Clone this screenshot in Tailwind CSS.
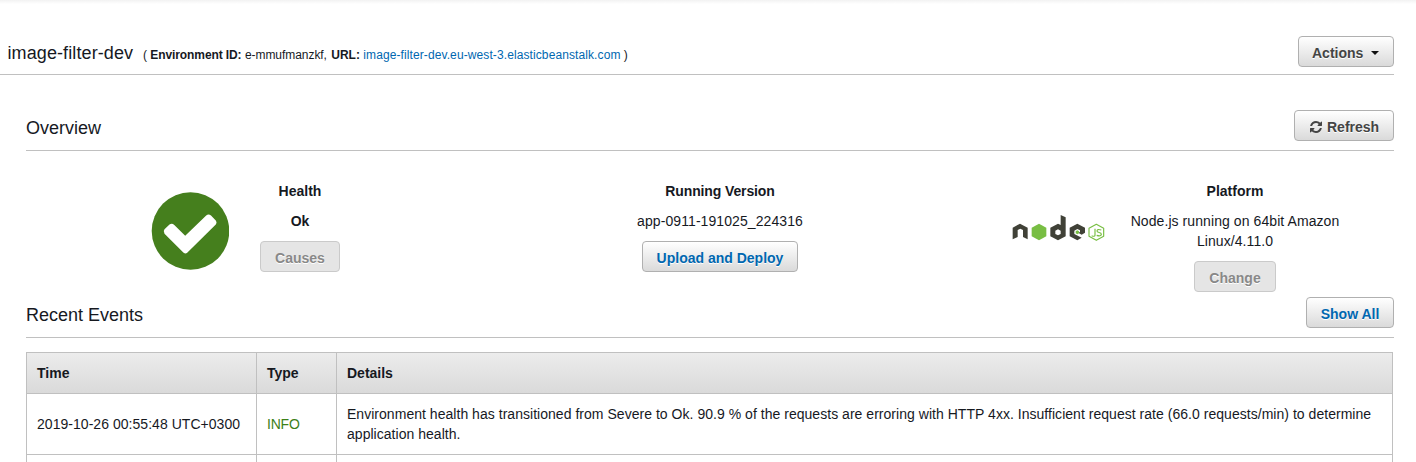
<!DOCTYPE html>
<html lang="en">
<head>
<meta charset="utf-8">
<title>image-filter-dev</title>
<script src="https://cdn.jsdelivr.net/npm/@tailwindcss/browser@4"></script>
</head>
<body class="h-[462px] overflow-hidden bg-white font-['Liberation_Sans',Arial,sans-serif] text-sm leading-5 text-[#16191f]">
<div class="h-1 bg-linear-to-b from-[#f2f2f2] to-white"></div>
<header class="mr-[22px] flex h-[71px] items-start justify-between border-b border-[#c0c0c0] pl-[7.500px]">
  <div class="flex items-baseline pt-[37px]">
    <h1 class="w-[135.500px] whitespace-nowrap text-lg leading-6 tracking-[0.1px]">image-filter-dev</h1>
    <p class="whitespace-nowrap text-xs">( <b class="tracking-[-0.1px]">Environment ID:</b> <span class="tracking-[-0.05px]">e-mmufmanzkf,</span> <b class="ml-px">URL:</b> <a class="tracking-[0.1px] text-[#0067b0]">image-filter-dev.eu-west-3.elasticbeanstalk.com</a> )</p>
  </div>
  <button class="mt-8 flex h-[31px] w-24 items-center rounded border border-[#b0b0b0] bg-linear-to-b from-white to-[#dadada] pt-[3px] pl-[13px] font-bold text-[#444] [text-shadow:0_1px_0_#fff]">Actions
    <svg class="mb-px ml-2 h-1 w-2" viewBox="0 0 8 4" fill="#111"><path d="M0 0H8L4 4Z"/></svg>
  </button>
</header>
<main class="mr-[22px] ml-[26px]">
  <section>
    <div class="flex h-[76px] items-start justify-between border-b border-[#c0c0c0] pt-[35px]">
      <h2 class="pt-1.5 text-lg leading-6">Overview</h2>
      <button class="flex h-[31px] w-[100px] items-center rounded border border-[#b0b0b0] bg-linear-to-b from-white to-[#dadada] pt-[3px] pl-[15px] font-bold text-[#444] [text-shadow:0_1px_0_#fff]">
        <svg class="mr-[5px] h-3 w-3 shrink-0" viewBox="0 0 1536 1536" fill="#444"><path d="M1511 928q0 5-1 7-64 268-268 434.500T764 1536q-146 0-282.500-55T238 1324l-129 129q-19 19-45 19t-45-19-19-45V960q0-26 19-45t45-19h448q26 0 45 19t19 45-19 45l-137 137q71 66 161 102t187 36q134 0 250-65t186-179q11-17 53-117 8-23 30-23h192q13 0 22.500 9.500t9.500 22.500zm25-800v448q0 26-19 45t-45 19h-448q-26 0-45-19t-19-45 19-45l138-138Q969 256 768 256q-134 0-250 65T332 500q-11 17-53 117-8 23-30 23H50q-13 0-22.500-9.500T18 608v-7q65-268 270-434.500T768 0q146 0 284 55.500T1297 212l130-129q19-19 45-19t45 19 19 45z"/></svg>Refresh
      </button>
    </div>
    <div class="flex h-[146px] items-start justify-between pt-[30px] pr-11 pl-[125px]">
      <div class="flex items-start">
        <svg class="mt-[11px] h-[78px] w-[78px]" viewBox="0 0 78 78"><circle cx="39.500" cy="39" r="38.800" fill="#457f1d"/><path d="M13.500 37.300 18.500 32.500Q21 31 23.300 32.900L34.200 43.800 55.200 23.500Q57.500 21.700 60 23.500L65 28.700Q66.200 30.500 64.800 32.600L36.200 60.700Q34.500 62.200 32.600 60.700L13.500 41.700Q11.700 39.500 13.500 37.300Z" fill="white"/></svg>
        <div class="ml-[31px] w-20 text-center"><b class="block">Health</b><b class="mt-2.5 block">Ok</b><button class="mt-2.5 h-[31px] w-20 rounded border border-[#cacaca] bg-[#e5e5e5] pt-[3px] font-bold text-[#888] [text-shadow:0_1px_0_#fff]">Causes</button></div>
      </div>
      <div class="ml-[87px] w-[168px] text-center"><b class="block tracking-[-0.12px]">Running Version</b><p class="mt-2.5 tracking-[0.08px]">app-0911-191025_224316</p><button class="mt-2.5 h-[31px] w-[156px] rounded border border-[#b0b0b0] bg-linear-to-b from-white to-[#dadada] pt-[3px] font-bold text-[#0067b0] [text-shadow:0_1px_0_#fff]">Upload and Deploy</button></div>
      <div class="flex items-start">
        <svg class="mt-[33px] h-[27px] w-[92px] overflow-visible" viewBox="24 26 276 81">
          <g fill="#404137">
            <path d="M23 67 45 55 68 67V102L54 95V74L46 70 38 74V95L23 102Z"/>
            <path fill-rule="evenodd" d="M167 29 182 36V93L159 105 136 93V67L159 55 167 59ZM159 72 151 76V86L159 90 167 86V76Z"/>
            <path fill-rule="evenodd" d="M217 55 240 67V82L230 88 221 83 225 79V75L217 71 208 76V86L230 97 217 105 194 93V67Z"/>
          </g>
          <path fill="#78be43" d="m102 55 22 12v26l-22 12-22-12V67Z"/>
          <path fill="#78be43" d="m217 75 5 3v6l-5 3-5-3v-6Z"/>
          <g fill="none" stroke="#78be43" stroke-width="3.500" stroke-linejoin="round"><path d="m274 57 22 12v24l-22 12-22-12V69Z"/><path d="M270 70V90Q269 95 260 91M289 74Q276 70 276 77C276 84 289 79 289 87Q288 94 275 90"/></g>
        </svg>
        <div class="ml-[15px] w-[230px] text-center"><b class="block">Platform</b><p class="mt-2.5 tracking-[0.08px]">Node.js running on 64bit Amazon<br>Linux/4.11.0</p><button class="mt-2.5 h-[31px] w-[82px] rounded border border-[#cacaca] bg-[#e5e5e5] pt-[3px] font-bold text-[#888] [text-shadow:0_1px_0_#fff]">Change</button></div>
      </div>
    </div>
  </section>
  <section>
    <div class="flex h-[41px] items-start justify-between border-b border-[#c0c0c0]">
      <h2 class="pt-1.5 text-lg leading-6">Recent Events</h2>
      <button class="h-[31px] w-[88px] rounded border border-[#b0b0b0] bg-linear-to-b from-white to-[#dadada] pt-[3px] font-bold text-[#0067b0] [text-shadow:0_1px_0_#fff]">Show All</button>
    </div>
    <div class="mt-3.5 mr-px grid grid-cols-[231px_80px_1fr] border border-b-0 border-[#c0c0c0]">
      <div class="col-span-3 grid h-[41px] grid-cols-subgrid border-b border-[#c0c0c0] bg-linear-to-b from-[#ececec] to-[#dadada] font-bold leading-10">
        <div class="w-[230px] border-r border-[#c0c0c0] pl-2.5">Time</div><div class="-ml-px w-20 border-r border-[#c0c0c0] pl-2.5">Type</div><div class="-ml-px pl-2.5">Details</div>
      </div>
      <div class="col-span-3 grid h-[61px] grid-cols-subgrid border-b border-[#c0c0c0]">
        <div class="w-[230px] border-r border-[#c0c0c0] pt-5 pl-2.5 tracking-[0.04px]">2019-10-26 00:55:48 UTC+0300</div><div class="-ml-px w-20 border-r border-[#c0c0c0] pt-5 pl-2.5 tracking-[-0.2px] text-[#3c8018]">INFO</div><div class="-ml-px whitespace-nowrap pt-2.5 pl-2.5 tracking-[0.032px]">Environment health has transitioned from Severe to Ok. 90.9 % of the requests are erroring with HTTP 4xx. Insufficient request rate (66.0 requests/min) to determine<br>application health.</div>
      </div>
      <div class="col-span-3 grid h-[7px] grid-cols-subgrid">
        <div class="w-[230px] border-r border-[#c0c0c0]"></div><div class="-ml-px w-20 border-r border-[#c0c0c0]"></div><div></div>
      </div>
    </div>
  </section>
</main>
</body>
</html>
